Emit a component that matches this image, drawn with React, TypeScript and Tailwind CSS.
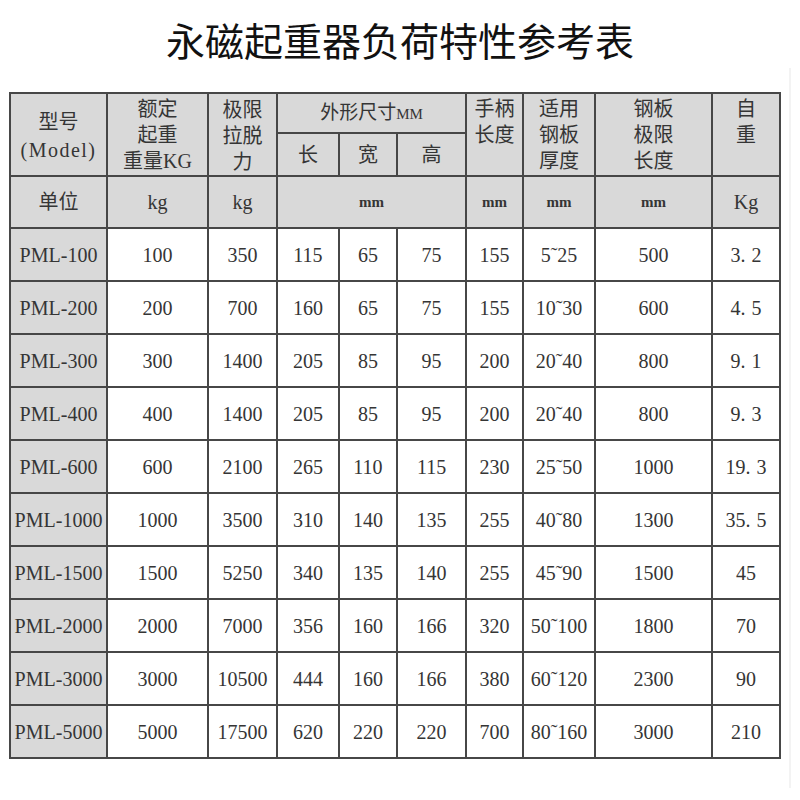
import React from 'react';

type Row = {
  model: string;
  load: string;
  pull: string;
  l: string;
  w: string;
  h: string;
  handle: string;
  plate: string;
  plateLen: string;
  weight: string;
};

const rows: Row[] = [
  { model: 'PML-100', load: '100', pull: '350', l: '115', w: '65', h: '75', handle: '155', plate: '5˜25', plateLen: '500', weight: '3.2' },
  { model: 'PML-200', load: '200', pull: '700', l: '160', w: '65', h: '75', handle: '155', plate: '10˜30', plateLen: '600', weight: '4.5' },
  { model: 'PML-300', load: '300', pull: '1400', l: '205', w: '85', h: '95', handle: '200', plate: '20˜40', plateLen: '800', weight: '9.1' },
  { model: 'PML-400', load: '400', pull: '1400', l: '205', w: '85', h: '95', handle: '200', plate: '20˜40', plateLen: '800', weight: '9.3' },
  { model: 'PML-600', load: '600', pull: '2100', l: '265', w: '110', h: '115', handle: '230', plate: '25˜50', plateLen: '1000', weight: '19.3' },
  { model: 'PML-1000', load: '1000', pull: '3500', l: '310', w: '140', h: '135', handle: '255', plate: '40˜80', plateLen: '1300', weight: '35.5' },
  { model: 'PML-1500', load: '1500', pull: '5250', l: '340', w: '135', h: '140', handle: '255', plate: '45˜90', plateLen: '1500', weight: '45' },
  { model: 'PML-2000', load: '2000', pull: '7000', l: '356', w: '160', h: '166', handle: '320', plate: '50˜100', plateLen: '1800', weight: '70' },
  { model: 'PML-3000', load: '3000', pull: '10500', l: '444', w: '160', h: '166', handle: '380', plate: '60˜120', plateLen: '2300', weight: '90' },
  { model: 'PML-5000', load: '5000', pull: '17500', l: '620', w: '220', h: '220', handle: '700', plate: '80˜160', plateLen: '3000', weight: '210' },
];

const cell = 'border-2 border-[#474747] text-center align-middle p-0';
const gray = 'bg-[#d9d9d9]';
const head = `${cell} ${gray} align-top pt-[2px] leading-[26px]`;
const unit = `${cell} ${gray} font-bold text-[15px]`;

// decimals in the weight column show a wide full-stop gap
const Weight = ({ v }: { v: string }) => {
  if (!v.includes('.')) return <>{v}</>;
  const [a, b] = v.split('.');
  return (
    <>
      {a}.<span className="ml-[6px]">{b}</span>
    </>
  );
};

export default function App() {
  return (
    <div
      className="relative w-[800px] h-[800px] bg-white text-[#353535]"
      style={{ fontFamily: '"Liberation Serif", "Noto Sans CJK SC", serif' }}
    >
      <h1 className="pt-[14px] h-[92px] text-center text-[39px] leading-[50px] text-[#111] font-normal font-['Noto_Sans_CJK_SC',sans-serif]">
        永磁起重器负荷特性参考表
      </h1>

      <div className="absolute left-[789px] top-[68px] h-[720px] w-[2px] bg-[#f3f3f3]" />

      <table className="ml-[9px] w-[771px] table-fixed border-collapse text-[20px]">
        <colgroup>
          <col className="w-[97px]" />
          <col className="w-[101px]" />
          <col className="w-[69px]" />
          <col className="w-[62px]" />
          <col className="w-[58px]" />
          <col className="w-[69px]" />
          <col className="w-[57px]" />
          <col className="w-[72px]" />
          <col className="w-[117px]" />
          <col className="w-[68px]" />
        </colgroup>
        <thead>
          <tr className="h-[40px]">
            <th rowSpan={2} className={`${cell} ${gray} font-normal leading-[28px] pt-[2px]`}>
              <div>型号</div>
              <div className="tracking-[1.5px]">(Model)</div>
            </th>
            <th rowSpan={2} className={`${head} font-normal`}>
              额定<br />起重<br />重量KG
            </th>
            <th rowSpan={2} className={`${head} font-normal pt-[3px]`}>
              极限<br />拉脱<br />力
            </th>
            <th colSpan={3} className={`${cell} ${gray} font-normal text-[19px]`}>
              外形尺寸<span className="text-[15px]">MM</span>
            </th>
            <th rowSpan={2} className={`${head} font-normal`}>
              手柄<br />长度
            </th>
            <th rowSpan={2} className={`${head} font-normal`}>
              适用<br />钢板<br />厚度
            </th>
            <th rowSpan={2} className={`${head} font-normal`}>
              钢板<br />极限<br />长度
            </th>
            <th rowSpan={2} className={`${head} font-normal`}>
              自<br />重
            </th>
          </tr>
          <tr className="h-[43px]">
            <th className={`${cell} ${gray} font-normal`}>长</th>
            <th className={`${cell} ${gray} font-normal`}>宽</th>
            <th className={`${cell} ${gray} font-normal`}>高</th>
          </tr>
          <tr className="h-[52px]">
            <th className={`${cell} ${gray} font-normal`}>单位</th>
            <th className={`${cell} ${gray} font-normal`}>kg</th>
            <th className={`${cell} ${gray} font-normal`}>kg</th>
            <th colSpan={3} className={unit}>mm</th>
            <th className={unit}>mm</th>
            <th className={unit}>mm</th>
            <th className={unit}>mm</th>
            <th className={`${cell} ${gray} font-normal`}>Kg</th>
          </tr>
        </thead>
        <tbody>
          {rows.map((r) => (
            <tr key={r.model} className="h-[53px]">
              <td className={`${cell} ${gray}`}>{r.model}</td>
              <td className={cell}>{r.load}</td>
              <td className={cell}>{r.pull}</td>
              <td className={cell}>{r.l}</td>
              <td className={cell}>{r.w}</td>
              <td className={cell}>{r.h}</td>
              <td className={cell}>{r.handle}</td>
              <td className={`${cell} whitespace-nowrap`}>{r.plate}</td>
              <td className={cell}>{r.plateLen}</td>
              <td className={cell}>
                <Weight v={r.weight} />
              </td>
            </tr>
          ))}
        </tbody>
      </table>
    </div>
  );
}
